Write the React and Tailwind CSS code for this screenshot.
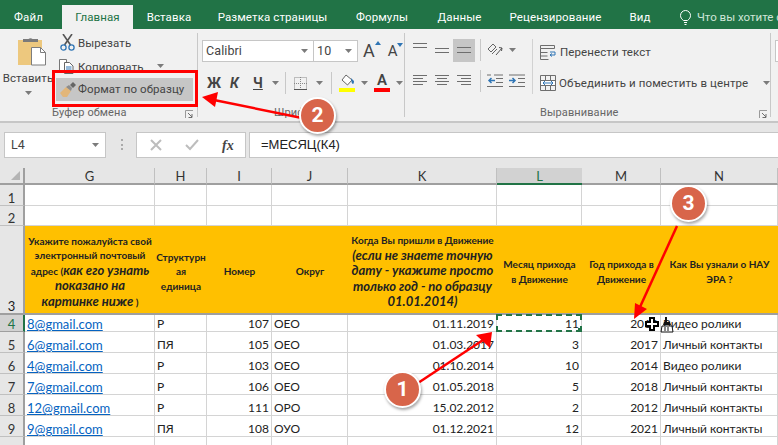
const Chev = ({ className = "" }) => (
  <svg width="7" height="4" viewBox="0 0 7 4" className={"shrink-0 " + className}><path d="M0 0h7L3.5 4z" fill="#7b7b7b" /></svg>
);
const Launcher = () => (
  <svg width="9" height="9" viewBox="0 0 9 9" className="shrink-0">
    <path d="M0.5 8V0.5H8" fill="none" stroke="#9a9a9a" />
    <path d="M3 3l4 4M7 4v3.5H3.5" fill="none" stroke="#6d6d6d" />
  </svg>
);
const Lines = ({ w = 14, rows, gap = 3 }) => (
  <svg width={w} height={rows.length * gap + 1} viewBox={`0 0 ${w} ${rows.length * gap + 1}`} className="shrink-0">
    {rows.map((r, i) => <rect key={i} x={r[0]} y={i * gap} width={r[1]} height="1" fill="#6e6e6e" />)}
  </svg>
);

const PasteIcon = () => (
  <svg width="29" height="30" viewBox="0 0 29 30">
    <rect x="1" y="4" width="24" height="25" fill="#edc87e" />
    <path d="M6 6V3h5.5a2.5 2 0 0 1 4 0H21v3z" fill="#7a7a7a" />
    <path d="M14.5 11.5h9l5 5v12.5h-14z" fill="#fff" stroke="#7d7d7d" />
    <path d="M23.500 11.500v5h5" fill="none" stroke="#7d7d7d" />
  </svg>
);
const Scissors = () => (
  <svg width="15" height="17" viewBox="0 0 15 17" className="shrink-0">
    <path d="M3 0l7.500 11M12 0L4.500 11" stroke="#555" strokeWidth="1.600" fill="none" />
    <circle cx="3.500" cy="13.500" r="2.600" fill="none" stroke="#2f75b5" strokeWidth="1.300" />
    <circle cx="11.500" cy="13.500" r="2.600" fill="none" stroke="#2f75b5" strokeWidth="1.300" />
  </svg>
);
const CopyIcon = () => (
  <svg width="15" height="15" viewBox="0 0 15 15" className="shrink-0">
    <path d="M0.500 0.500h7v11h-7z" fill="#fff" stroke="#777" />
    <path d="M5.500 3.500h5l3.500 3.500v7.500h-8.500z" fill="#fff" stroke="#666" />
    <path d="M7 8h5.500M7 10h5.500M7 12h5.500" stroke="#2f75b5" />
  </svg>
);
const BrushIcon = () => (
  <svg width="16" height="15" viewBox="0 0 16 15" className="shrink-0">
    <path d="M0 11l6-6 5 4-4 6H3z" fill="#e2b679" />
    <path d="M6 5l3-2 3 3-1 3z" fill="#8c8c8c" />
    <path d="M10 3l3-3 3 3-3 3z" fill="#666" />
  </svg>
);

const Ribbon = () => (
  <div className="flex h-[92px] whitespace-nowrap bg-[#f1f1f1] pt-[4px] text-[11.500px] tracking-[0.1px] text-[#444]">
    <div className="flex h-[84px] w-[198px] shrink-0 flex-col border-r border-[#c8c8c8]">
      <div className="flex h-[73px]">
        <div className="flex w-[56px] shrink-0 flex-col items-center">
          <div className="ml-[6px] mt-[3px]"><PasteIcon /></div>
          <div className="mt-[4px] leading-[16px]">Вставить</div>
          <Chev className="mt-[5px]" />
        </div>
        <div className="flex w-[137px] shrink-0 flex-col">
          <div className="ml-[4px] mt-[1px] flex h-[17px] items-center gap-[3px]"><Scissors /><span className="pt-[3px]">Вырезать</span></div>
          <div className="ml-[3px] mt-[6px] flex h-[18px] items-center gap-[4px]"><CopyIcon /><span className="pt-[3px]">Копировать</span><Chev className="ml-[9px]" /></div>
          <div className="mt-[3px] flex h-[23px] items-center gap-[2px] bg-[#c6c6c6] pl-[4px]"><BrushIcon /><span className="pt-[1px]">Формат по образцу</span></div>
        </div>
      </div>
      <div className="flex h-[11px] items-start justify-between pl-[52px] pr-[3px] text-[11px] leading-[14px] text-[#666]">
        <span>Буфер обмена</span><span className="pt-[4px]"><Launcher /></span>
      </div>
    </div>

    <div className="flex h-[84px] w-[207px] shrink-0 flex-col border-r border-[#c8c8c8] pl-[4px]">
      <div className="flex h-[73px] flex-col">
        <div className="mt-[7px] flex h-[22px] items-center">
          <div className="flex h-[22px] w-[112px] items-center justify-between border border-[#c6c6c6] bg-white pl-[3px] pr-[5px] text-[12.500px]">Calibri<Chev /></div>
          <div className="flex h-[22px] w-[44px] items-center justify-between border border-l-0 border-[#c6c6c6] bg-white pl-[3px] pr-[5px] text-[12.500px]">10<Chev /></div>
          <span className="relative ml-[5px] text-[18px] leading-[20px]">A<span className="absolute left-[12px] top-[0px] h-0 w-0 border-x-[3px] border-b-[4px] border-x-transparent border-b-[#2f75b5]" /></span>
          <span className="relative ml-[13px] text-[15px] leading-[20px]">A<span className="absolute left-[9px] top-[2px] h-0 w-0 border-x-[3px] border-t-[4px] border-x-transparent border-t-[#2f75b5]" /></span>
        </div>
        <div className="mt-[9px] flex h-[24px] items-center">
          <span className="ml-[5px] w-[23px] text-[14px] font-bold">Ж</span>
          <span className="w-[23px] text-[14px] font-bold italic">К</span>
          <span className="w-[19px] text-[14px] font-bold underline">Ч</span>
          <Chev />
          <span className="ml-[6px] h-[22px] w-px bg-[#c8c8c8]" />
          <svg width="13" height="13" viewBox="0 0 13 13" className="ml-[8px]">
            <path d="M0.500 0.500h12v12h-12zM6.500 0v13M0 6.500h13" fill="none" stroke="#888" strokeDasharray="1 1" />
            <path d="M0 12.500h13" stroke="#555" />
          </svg>
          <Chev className="ml-[9px]" />
          <span className="ml-[8px] h-[22px] w-px bg-[#c8c8c8]" />
          <div className="ml-[7px] flex w-[16px] flex-col items-center">
            <svg width="15" height="13" viewBox="0 0 15 13"><path d="M6 1l6 5-4.500 5-5.500-5z" fill="#fff" stroke="#666" /><path d="M11 4l3 3c0 2-.500 3-1 3s-1.500-1-1.500-2.500z" fill="#2f75b5" /></svg>
            <span className="mt-[1px] h-[4px] w-[16px] bg-[#ffff00]" />
          </div>
          <Chev className="ml-[6px]" />
          <div className="ml-[6px] flex w-[16px] flex-col items-center">
            <span className="text-[15px] font-semibold leading-[13px]">A</span>
            <span className="mt-[1px] h-[4px] w-[16px] bg-[#ff0000]" />
          </div>
          <Chev className="ml-[6px]" />
        </div>
      </div>
      <div className="h-[11px] pl-[72px] text-[11px] leading-[14px] text-[#666]">Шрифт</div>
    </div>

    <div className="flex h-[84px] w-[366px] shrink-0 flex-col border-r border-[#c8c8c8]">
      <div className="flex h-[73px]">
        <div className="mt-[6px] flex h-[55px] w-[128px] shrink-0 flex-col border-r border-[#d2d2d2] pl-[8px]">
          <div className="flex h-[24px] items-start">
            <div className="mt-[4px] w-[22px]"><Lines rows={[[0,14],[0,14]]} gap={4} /></div>
            <div className="mt-[9px] w-[18px]"><Lines rows={[[0,14],[0,14]]} gap={4} /></div>
            <div className="flex h-[23px] w-[22px] items-end justify-center bg-[#c6c6c6] pb-[4px]"><Lines rows={[[0,14],[0,14]]} gap={5} /></div>
            <span className="ml-[5px] h-[22px] w-px bg-[#c8c8c8]" />
            <svg width="16" height="15" viewBox="0 0 16 15" className="ml-[6px] mt-[3px] shrink-0">
              <path d="M1 7l5-5 3 3-5 5zM5 12l5-5" fill="none" stroke="#666" />
              <path d="M9 13l6-7M12 5.500l3 .500-.500 3" fill="none" stroke="#555" />
            </svg>
            <Chev className="ml-[6px] mt-[9px]" />
          </div>
          <div className="mt-[7px] flex h-[22px] items-center">
            <div className="w-[22px]"><Lines rows={[[0,14],[0,10],[0,14],[0,10]]} /></div>
            <div className="w-[22px]"><Lines rows={[[0,14],[2,10],[0,14],[2,10]]} /></div>
            <div className="w-[18px]"><Lines rows={[[0,14],[4,10],[0,14],[4,10]]} /></div>
            <span className="ml-[5px] h-[22px] w-px bg-[#c8c8c8]" />
            <svg width="16" height="14" viewBox="0 0 16 14" className="ml-[6px] shrink-0">
              <path d="M7 1h9M9 4.500h7M9 8.500h7M0 12.500h16M0 1h4" stroke="#6e6e6e" />
              <path d="M8 6.500H2M4.500 4L2 6.500 4.500 9" fill="none" stroke="#2f75b5" strokeWidth="1.500" />
            </svg>
            <svg width="16" height="14" viewBox="0 0 16 14" className="ml-[6px] shrink-0">
              <path d="M0 1h16M9 4.500h7M9 8.500h7M0 12.500h16" stroke="#6e6e6e" />
              <path d="M0 6.500h6M3.500 4L6 6.500 3.500 9" fill="none" stroke="#2f75b5" strokeWidth="1.500" />
            </svg>
          </div>
        </div>
        <div className="flex flex-col pl-[7px]">
          <div className="mt-[9px] flex h-[20px] items-center gap-[4px]">
            <svg width="16" height="15" viewBox="0 0 16 15" className="shrink-0">
              <path d="M.500.500h14v3H.500zM.500 3.500v11h8M.500 7.500h7M.500 11h7" fill="none" stroke="#6e6e6e" />
              <path d="M10 7h5v3h-5M12 8.500l-2 1.500 2 1.500" fill="none" stroke="#2f75b5" />
            </svg>
            <span className="pt-[2px]">Перенести текст</span>
          </div>
          <div className="mt-[11px] flex h-[20px] items-center gap-[3px]">
            <svg width="16" height="16" viewBox="0 0 16 16" className="shrink-0">
              <path d="M.500.500h15v15H.500zM.500 5.500h15M.500 10.500h15M5.500.500v5M10.500.500v5M5.500 10.500v5M10.500 10.500v5" fill="none" stroke="#6e6e6e" />
              <rect x="1" y="6" width="14" height="4" fill="#fff" />
              <path d="M3 8h10M5 6l-2 2 2 2M11 6l2 2-2 2" fill="none" stroke="#2f75b5" />
            </svg>
            <span className="pt-[2px]">Объединить и поместить в центре</span>
            <Chev className="ml-[12px]" />
          </div>
        </div>
      </div>
      <div className="flex h-[11px] items-start justify-between pl-[135px] pr-[2px] text-[11px] leading-[14px] text-[#666]">
        <span>Выравнивание</span><span className="pt-[4px]"><Launcher /></span>
      </div>
    </div>
    <div className="ml-[4px] mt-[7px] h-[22px] flex-1 border border-r-0 border-[#c6c6c6] bg-white" />
  </div>
);

const tabs = [
  ["Файл", 57, 5], ["Главная", 71, 0], ["Вставка", 72, 0], ["Разметка страницы", 135, 0], ["Формулы", 84, 0], ["Данные", 71, 0], ["Рецензирование", 121, 0], ["Вид", 48, 0],
];

const Tabs = () => (
  <div className="flex h-[29px] items-end whitespace-nowrap bg-[#217346] text-[11.500px] tracking-[0.1px] text-white">
    {tabs.map(([t, w, m]) => (
      <div key={t} style={{ width: w, marginRight: m }} className={"flex h-[24px] shrink-0 items-center justify-center pt-[2px] " + (t === "Главная" ? "bg-[#f1f1f1] text-[#217346]" : "")}>{t}</div>
    ))}
    <div className="flex h-[24px] items-center gap-[6px] pl-[16px] text-[#cfe6d8]">
      <svg width="11" height="15" viewBox="0 0 11 15" className="shrink-0"><path d="M3.500 10.500C1.500 9 .500 7.500.500 5.500a5 5 0 0 1 10 0c0 2-1 3.500-3 5zM4 12.500h3M4.500 14.500h2" fill="none" stroke="#fff" /></svg>
      <span className="pt-[2px] tracking-normal">Что вы хотите с</span>
    </div>
  </div>
);

const FormulaBar = () => (
  <div className="flex h-[44px] border-t-2 border-[#c6c6c6] bg-[#e6e6e6] pt-[9px] text-[#444]">
    <div className="ml-[4px] flex h-[26px] w-[102px] items-center justify-between border border-[#c6c6c6] bg-white pl-[6px] pr-[6px] text-[12.500px]">L4<Chev /></div>
    <div className="ml-[15px] mt-[7px] flex h-[11px] flex-col justify-between"><i className="h-[2px] w-[2px] bg-[#aaa]" /><i className="h-[2px] w-[2px] bg-[#aaa]" /><i className="h-[2px] w-[2px] bg-[#aaa]" /></div>
    <div className="ml-[13px] flex h-[26px] w-[110px] items-center border border-[#c6c6c6] bg-white">
      <svg width="12" height="12" viewBox="0 0 12 12" className="ml-[13px]"><path d="M1 1l10 10M11 1L1 11" stroke="#bdbdbd" strokeWidth="2" /></svg>
      <svg width="14" height="12" viewBox="0 0 14 12" className="ml-[23px]"><path d="M1 6l4 4 8-9" fill="none" stroke="#bdbdbd" strokeWidth="2" /></svg>
      <span className="ml-[23px] font-['Liberation_Serif',serif] text-[14px] font-bold italic">fx</span>
    </div>
    <div className="ml-[3px] flex h-[26px] flex-1 items-center border border-r-0 border-[#c6c6c6] bg-white pl-[11px] font-['Liberation_Sans',sans-serif] text-[13px] text-[#222]">=МЕСЯЦ(К4)</div>
  </div>
);

const cols = ["G", "H", "I", "J", "K", "L", "M", "N"];
const rows = [
  ["8@gmail.com", "Р", "107", "ОЕО", "01.11.2019", "11", "2019", "Видео ролики"],
  ["6@gmail.com", "ПЯ", "105", "ОЕО", "01.03.2017", "3", "2017", "Личный контакты"],
  ["4@gmail.com", "Р", "103", "ОЕО", "01.10.2014", "10", "2014", "Видео ролики"],
  ["7@gmail.com", "Р", "106", "ОЕО", "01.05.2018", "5", "2018", "Личный контакты"],
  ["12@gmail.com", "Р", "111", "ОРО", "15.02.2012", "2", "2012", "Личный контакты"],
  ["9@gmail.com", "ПЯ", "108", "ОУО", "01.12.2021", "12", "2021", "Личный контакты"],
];
const rightAligned = [2, 4, 5, 6];
const RowHead = ({ n, active }) => (
  <div className={"flex items-end justify-center border-b border-r-2 text-[13px] leading-[14px] " + (active ? "border-b-[#9f9f9f] border-r-[#217346] bg-[#d2d2d2] text-[#217346]" : "border-b-[#c0c0c0] border-r-[#9f9f9f] bg-[#e6e6e6] text-[#333]")}>{n}</div>
);
const Empty = () => <div className="border-b border-r border-[#d4d4d4] bg-white" />;
const Y = ({ children }) => (
  <div className="flex items-center justify-center whitespace-nowrap border-b-2 border-[#9f9f9f] bg-[#ffc000] pt-[4px] text-center text-[10px] font-bold leading-[14.500px] text-[#222]"><div>{children}</div></div>
);
const It = ({ children }) => <span className="text-[13px] italic">{children}</span>;

const Sheet = () => (
  <div className="bg-[#e6e6e6] pt-[3px]">
    <div className="grid h-[277px] grid-cols-[25px_130px_52px_65px_76px_149px_85px_79px_1fr] grid-rows-[17px_21px_20px_89px_17px_21px_21px_21px_21px_21px_21px] overflow-hidden font-['Lato','Open_Sans',sans-serif] text-[12px] text-[#222]">
      <div className="flex items-end justify-end border-b-2 border-r-2 border-[#9f9f9f] pb-[3px] pr-[3px]">
        <span className="h-0 w-0 border-b-[9px] border-l-[9px] border-b-[#b4b4b4] border-l-transparent" />
      </div>
      {cols.map((c) => (
        <div key={c} className={"flex items-center justify-center border-b-2 pt-[3px] text-[13px] " + (c === "L" ? "border-[#217346] bg-[#d2d2d2] text-[#217346]" : "border-r border-b-[#9f9f9f] border-r-[#c0c0c0] text-[#333]")}>{c}</div>
      ))}
      {[1, 2].map((n) => [
        <RowHead key={n} n={n} />,
        ...cols.map((c) => <Empty key={n + c} />),
      ])}
      <div className="flex items-end justify-center border-b-2 border-r-2 border-[#9f9f9f] bg-[#e6e6e6] text-[13px] leading-[14px]">3</div>
      <Y>Укажите пожалуйста свой<br />электронный почтовый<br />адрес (<It>как его узнать<br />показано на<br />картинке ниже</It> )</Y>
      <Y>Структурн<br />ая<br />единица</Y>
      <Y>Номер</Y>
      <Y>Округ</Y>
      <Y>Когда Вы пришли в Движение<br /><It>(если не знаете точную<br />дату - укажите просто<br />только год - по образцу<br />01.01.2014)</It></Y>
      <Y>Месяц прихода<br />в Движение</Y>
      <Y>Год прихода в<br />Движение</Y>
      <Y>Как Вы узнали о НАУ<br />ЭРА ?</Y>
      {rows.map((r, i) => [
        <RowHead key={"h" + i} n={i + 4} active={i === 0} />,
        ...r.map((v, j) => (
          <div key={i + "-" + j} className={"relative flex items-end whitespace-nowrap border-b border-r border-[#d4d4d4] bg-white px-[2px] leading-[14px] " + (rightAligned.includes(j) ? "justify-end " : "") + (j === 0 ? "text-[13px] text-[#0563c1] underline" : "")}>
            {v}
            {i === 0 && j === 5 && (
              <span className="absolute -left-px -top-px h-[18px] w-[86px] border-2 border-dashed border-[#217346]">
                <span className="absolute -bottom-[3px] -right-[3px] h-[5px] w-[5px] bg-[#217346]" />
              </span>
            )}
          </div>
        )),
      ])}
      <RowHead n="" />
      {cols.map((c) => <Empty key={"e" + c} />)}
    </div>
  </div>
);

const Badge = ({ n, className }) => (
  <div className={"absolute flex h-[37px] w-[37px] items-center justify-center rounded-full border-2 border-white bg-[#d8654a] text-[21px] font-bold text-white shadow-[1px_2px_3px_rgba(0,0,0,0.35)] " + className}>{n}</div>
);

const Overlay = () => (
  <>
    <div className="absolute left-[52px] top-[70px] h-[37px] w-[146px] border-[3px] border-[#ff0000]" />
    <svg width="778" height="445" viewBox="0 0 778 445" className="absolute left-0 top-0">
      <path d="M302 118L214 100" stroke="#ff0000" strokeWidth="2.500" />
      <path d="M202 97l16-5-3 15z" fill="#ff0000" />
      <path d="M677 226L640 307" stroke="#ff0000" strokeWidth="2.500" />
      <path d="M634 319l1-16 12 6z" fill="#ff0000" />
      <path d="M418 383L483 340" stroke="#ff0000" strokeWidth="2.500" />
      <path d="M492 332l-16 3 14 13z" fill="#ff0000" />
      <path d="M650 318h4v4h4v4h-4v4h-4v-4h-4v-4h4z" fill="#fff" stroke="#000" strokeWidth="2" />
      <path d="M665 317h2v5h3l1 3h-8l1-3h1z" fill="#111" />
      <path d="M662 326h10l1 6h-12z" fill="#fff" stroke="#111" />
      <path d="M665 327v4M668 327v4" stroke="#111" />
    </svg>
    <Badge n="2" className="left-[299px] top-[97px]" />
    <Badge n="3" className="left-[670px] top-[185px]" />
    <Badge n="1" className="left-[384px] top-[371px]" />
  </>
);

export default function App() {
  return (
    <div className="relative h-[445px] w-[778px] overflow-hidden bg-white font-['Roboto','Open_Sans',sans-serif]">
      <Tabs />
      <Ribbon />
      <FormulaBar />
      <Sheet />
      <Overlay />
    </div>
  );
}
